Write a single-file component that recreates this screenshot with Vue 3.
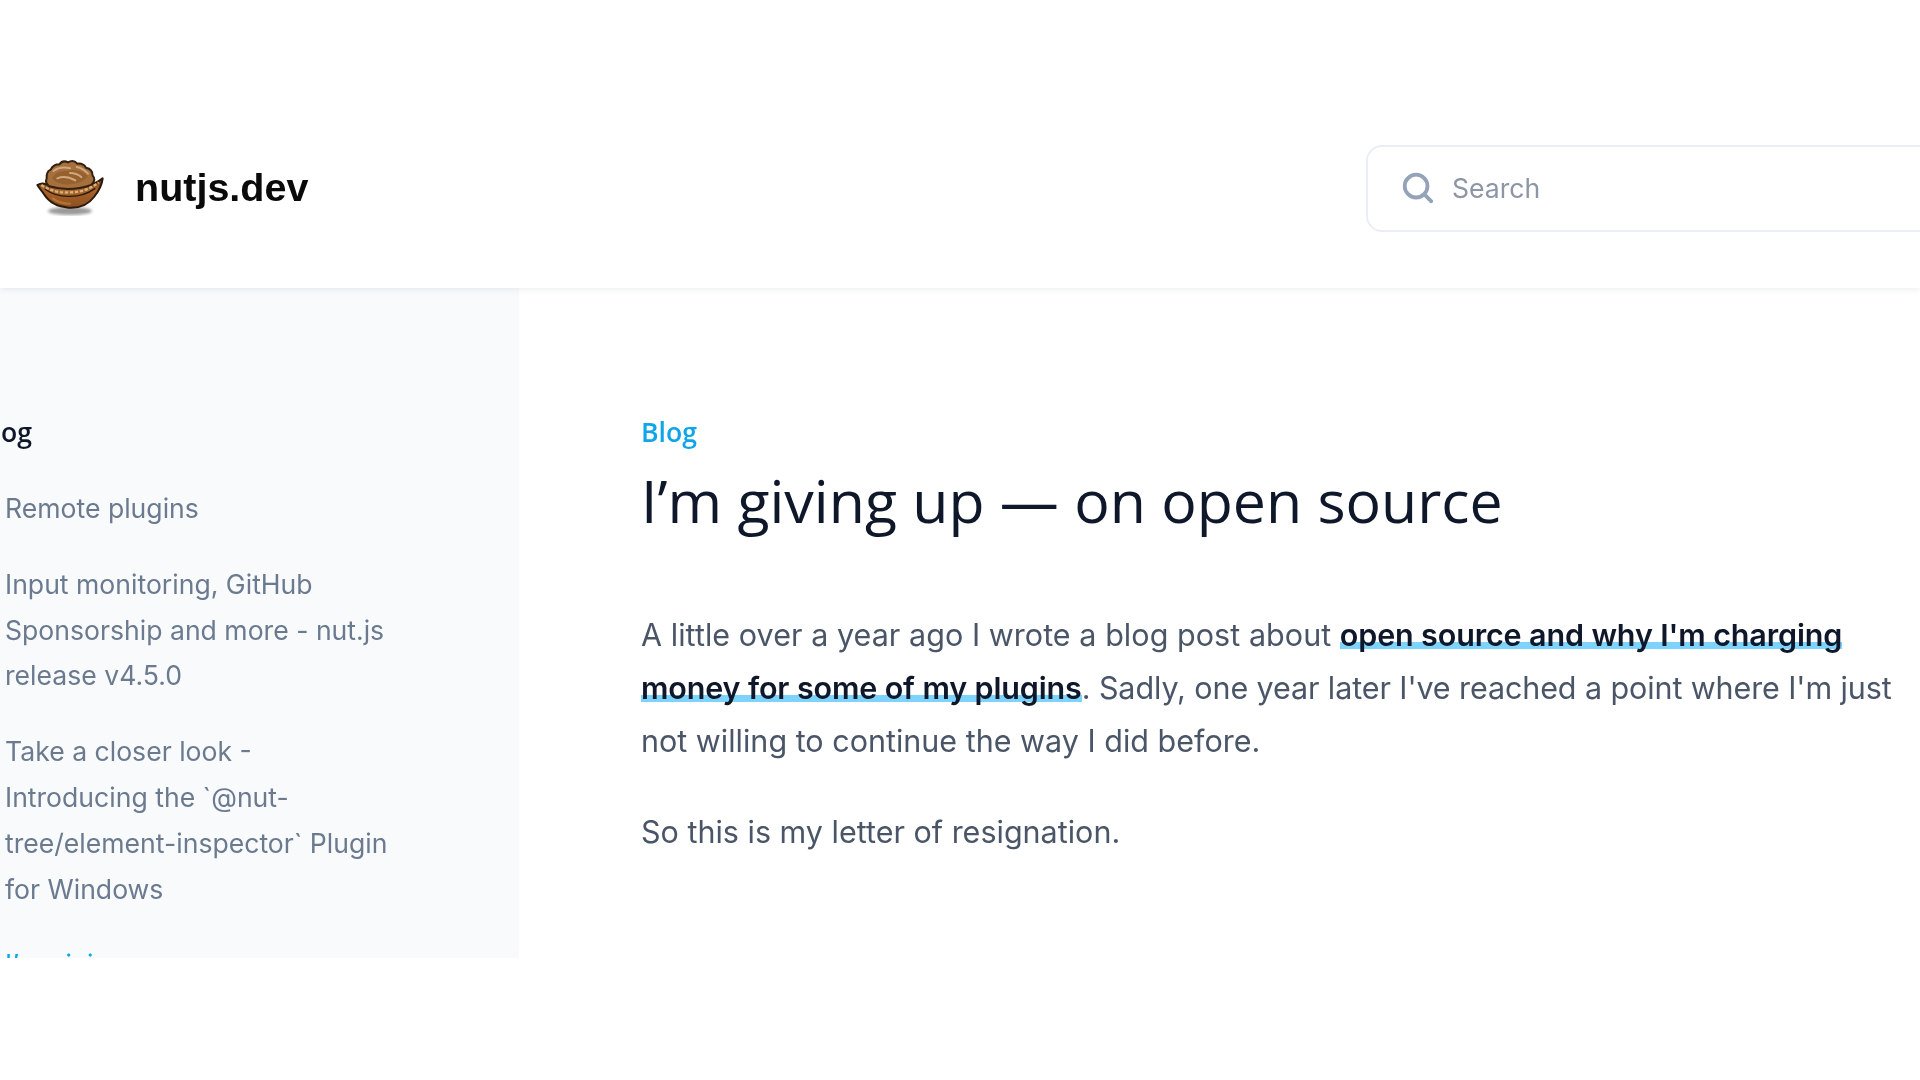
<template>
  <div class="page">
    <header class="header">
      <div class="brand">
        <svg class="logo" viewBox="0 -6 300 270" width="100" height="90" aria-hidden="true">
          <defs>
            <filter id="soft"><feGaussianBlur stdDeviation="5" /></filter>
            <linearGradient id="shell" x1="0" y1="0" x2="0" y2="1">
              <stop offset="0" stop-color="#6f3d16" />
              <stop offset="0.4" stop-color="#a9642a" />
              <stop offset="1" stop-color="#8a5022" />
            </linearGradient>
          </defs>
          <ellipse cx="150" cy="198" rx="66" ry="12" fill="#9a9a9a" filter="url(#soft)" />
          <path d="M52 120 Q66 112 78 118 Q150 140 222 116 Q236 110 248 100 C246 122 236 138 222 156 C204 180 176 190 146 188 C112 186 86 170 72 148 C66 138 58 130 52 120 Z" fill="url(#shell)" stroke="#2c1a0c" stroke-width="6" stroke-linejoin="round" />
          <path d="M80 100 Q78 80 92 74 Q100 58 118 58 Q128 44 144 52 Q160 42 172 56 Q190 54 198 68 Q218 72 218 92 Q230 104 214 120 Q150 142 88 124 Q74 114 80 100 Z" fill="#a66f3e" stroke="#33200f" stroke-width="6" stroke-linejoin="round" />
          <path d="M96 100 Q108 76 140 78 Q176 68 204 94 Q190 116 150 118 Q112 120 96 100 Z" fill="#96602f" />
          <path d="M100 78 Q122 62 150 70 M170 66 Q190 70 204 86 M112 100 Q136 90 166 106 M150 84 Q170 84 184 96" fill="none" stroke="#d0a97d" stroke-width="6" stroke-linecap="round" />
          <path d="M64 120 Q104 146 150 142 Q198 142 236 112" fill="none" stroke="#d6b182" stroke-width="7" stroke-dasharray="10 5" />
          <path d="M74 132 Q108 156 150 154 Q192 154 226 130" fill="none" stroke="#2c1a0c" stroke-width="4" />
          <path d="M98 160 Q120 176 150 176" fill="none" stroke="#d68a45" stroke-width="6" opacity="0.55" stroke-linecap="round" />
        </svg>
        <span class="brand-name">nutjs.dev</span>
      </div>
      <div class="search">
        <svg class="search-icon" viewBox="0 0 20 20" width="38" height="38" fill="none" aria-hidden="true">
          <path d="M16.293 17.707a1 1 0 0 0 1.414-1.414l-1.414 1.414ZM9 14a5 5 0 0 1-5-5H2a7 7 0 0 0 7 7v-2ZM4 9a5 5 0 0 1 5-5V2a7 7 0 0 0-7 7h2Zm5-5a5 5 0 0 1 5 5h2a7 7 0 0 0-7-7v2Zm8.707 12.293-3.757-3.757-1.414 1.414 3.757 3.757 1.414-1.414ZM14 9a4.98 4.98 0 0 1-1.464 3.536l1.414 1.414A6.98 6.98 0 0 0 16 9h-2Zm-1.464 3.536A4.98 4.98 0 0 1 9 14v2a6.98 6.98 0 0 0 4.95-2.05l-1.414-1.414Z" fill="#94a3b8" />
        </svg>
        <span class="search-text">Search</span>
      </div>
    </header>
    <div class="body-row">
      <aside class="sidebar">
        <div class="nav-title">Blog</div>
        <ul class="nav">
          <li v-for="item in items" :key="item.text" :class="{ active: item.active }">{{ item.text }}</li>
        </ul>
      </aside>
      <main class="main">
        <div class="eyebrow">Blog</div>
        <h1 class="title">I’m giving up — on open source</h1>
        <p class="para"><span class="wide">A little over a year ago I wrote a blog post about</span> <a class="link">open source and why I'm charging money for some of my plugins</a><span class="tight">. Sadly, one year later I've reached a point where I'm just</span> not willing to continue the way I did before.</p>
        <p class="para">So this is my letter of resignation.</p>
      </main>
    </div>
  </div>
</template>

<script setup>
const items = [
  { text: 'Remote plugins' },
  { text: 'Input monitoring, GitHub Sponsorship and more - nut.js release v4.5.0' },
  { text: 'Take a closer look - Introducing the `@nut-tree/element-inspector` Plugin for Windows' },
  { text: 'I’m giving up — on open source', active: true }
]
</script>

<style>
html, body { margin: 0; background: #fff; overflow: hidden; }
</style>

<style scoped>
.page {
  width: 1920px;
  height: 1080px;
  overflow: hidden;
  font-family: Inter, "Liberation Sans", sans-serif;
  background: #fff;
  filter: blur(0.5px);
}
.header {
  height: 288px;
  box-sizing: border-box;
  padding: 88px 0 0 20px;
  display: flex;
  align-items: center;
  overflow: hidden;
  box-shadow: 0 2px 6px rgba(15, 23, 42, 0.07);
  position: relative;
}
.brand {
  width: 1346px;
  flex-shrink: 0;
  display: flex;
  align-items: center;
}
.logo { flex-shrink: 0; }
.brand-name {
  margin-left: 15px;
  font-family: "Liberation Sans", Arial, sans-serif;
  font-weight: 700;
  font-size: 39.5px;
  color: #0a0a0a;
  line-height: 1;
}
.search {
  width: 620px;
  height: 87px;
  flex-shrink: 0;
  box-sizing: border-box;
  border: 2px solid #ebeff5;
  border-radius: 16px;
  display: flex;
  align-items: center;
  padding-left: 31px;
  gap: 15px;
}
.search-text { font-size: 26.6px; color: #8c96a6; }
.search-icon { flex-shrink: 0; }
.body-row { display: flex; align-items: flex-start; }
.sidebar {
  width: 519px;
  height: 670px;
  flex-shrink: 0;
  overflow: hidden;
  background: #f8fafc;
  box-sizing: border-box;
  padding: 121px 0 0 5px;
}
.nav-title {
  margin-left: -29px;
  font-family: "Open Sans", sans-serif;
  font-weight: 600;
  font-size: 26.6px;
  line-height: 46px;
  color: #0f172a;
}
.nav {
  list-style: none;
  margin: 31px 0 0;
  padding: 0;
  width: 392px;
  display: flex;
  flex-direction: column;
  gap: 30px;
  font-size: 26.6px;
  line-height: 45.8px;
  color: #6b7a8f;
}
.nav .active { color: #0ea5e9; }
.main {
  flex: 0 0 auto;
  box-sizing: border-box;
  padding: 121px 0 0 122px;
  width: 1401px;
}
.eyebrow {
  font-family: "Open Sans", sans-serif;
  font-weight: 600;
  font-size: 26.6px;
  line-height: 46px;
  color: #0ea5e9;
}
.title {
  margin: 7px 0 0;
  font-family: "Open Sans", sans-serif;
  font-weight: 500;
  font-size: 59px;
  line-height: 76px;
  color: #0f172a;
}
.para {
  margin: 70px 0 0;
  font-size: 30.5px;
  line-height: 53px;
  color: #4a5668;
}
.para + .para { margin-top: 38px; }
.wide { letter-spacing: 0.05px; }
.tight { letter-spacing: -0.1px; }
.link {
  font-weight: 600;
  letter-spacing: -0.14px;
  color: #0f172a;
  box-shadow: inset 0 -4px 0 0 #fff, inset 0 -11px 0 0 #7dd3fc;
}
</style>
